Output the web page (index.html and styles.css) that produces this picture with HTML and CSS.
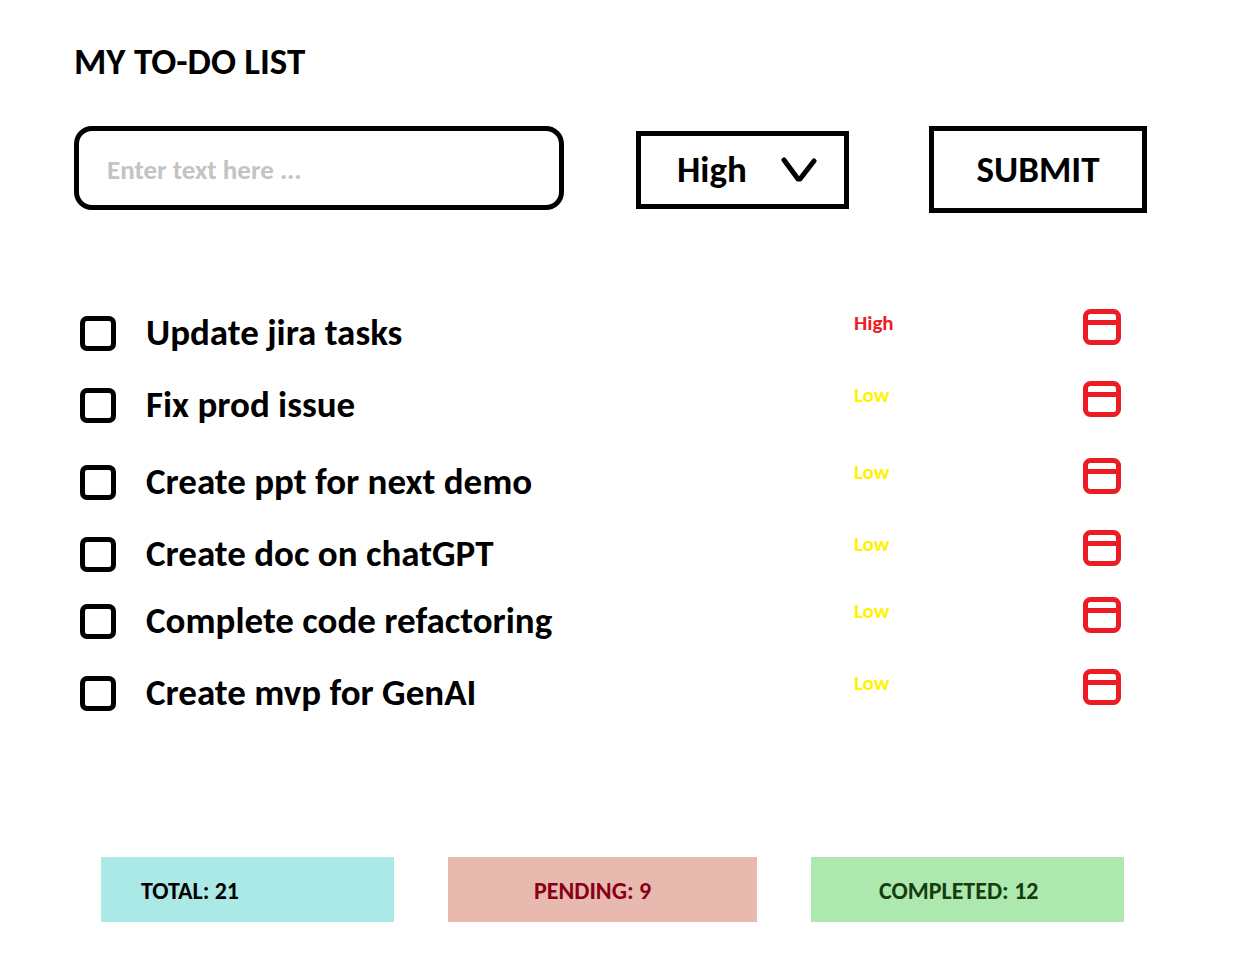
FILE: index.html
```html
<!DOCTYPE html>
<html lang="en">
<head>
<meta charset="utf-8">
<meta name="viewport" content="width=device-width, initial-scale=1">
<title>My To-Do List</title>
<link rel="stylesheet" href="styles.css">
</head>
<body>
<svg class="symbols" aria-hidden="true">
  <symbol id="bin" viewBox="0 0 38 36">
    <rect x="2.5" y="2.5" width="33" height="31" rx="5" fill="none" stroke="currentColor" stroke-width="5"/>
    <path d="M3 13.5H35" stroke="currentColor" stroke-width="5"/>
  </symbol>
</svg>
<main class="page">
  <h1 class="title">MY TO-DO LIST</h1>
  <form class="entry">
    <input class="entry-text" type="text" placeholder="Enter text here ..." aria-label="Task">
    <div class="priority">
      <select class="priority-select" aria-label="Priority">
        <option selected>High</option>
        <option>Low</option>
      </select>
      <svg class="chevron" viewBox="0 0 36 26" aria-hidden="true"><path d="M3 3L17 22H19L33 4" fill="none" stroke="currentColor" stroke-width="5" stroke-linecap="round" stroke-linejoin="round"/></svg>
    </div>
    <button class="submit" type="button">SUBMIT</button>
  </form>
  <ul class="tasks">
    <li class="task"><input class="check" type="checkbox" id="t1"><label class="name" for="t1">Update jira tasks</label><span class="level high">High</span><button class="remove" type="button" aria-label="Delete"><svg class="bin"><use href="#bin"/></svg></button></li>
    <li class="task"><input class="check" type="checkbox" id="t2"><label class="name" for="t2">Fix prod issue</label><span class="level low">Low</span><button class="remove" type="button" aria-label="Delete"><svg class="bin"><use href="#bin"/></svg></button></li>
    <li class="task"><input class="check" type="checkbox" id="t3"><label class="name" for="t3">Create ppt for next demo</label><span class="level low">Low</span><button class="remove" type="button" aria-label="Delete"><svg class="bin"><use href="#bin"/></svg></button></li>
    <li class="task"><input class="check" type="checkbox" id="t4"><label class="name" for="t4">Create doc on chatGPT</label><span class="level low">Low</span><button class="remove" type="button" aria-label="Delete"><svg class="bin"><use href="#bin"/></svg></button></li>
    <li class="task"><input class="check" type="checkbox" id="t5"><label class="name" for="t5">Complete code refactoring</label><span class="level low">Low</span><button class="remove" type="button" aria-label="Delete"><svg class="bin"><use href="#bin"/></svg></button></li>
    <li class="task"><input class="check" type="checkbox" id="t6"><label class="name" for="t6">Create mvp for GenAI</label><span class="level low">Low</span><button class="remove" type="button" aria-label="Delete"><svg class="bin"><use href="#bin"/></svg></button></li>
  </ul>
  <section class="stats">
    <div class="stat total">TOTAL: 21</div>
    <div class="stat pending">PENDING: 9</div>
    <div class="stat completed">COMPLETED: 12</div>
  </section>
</main>
</body>
</html>
```
FILE: styles.css
```css
* { box-sizing: border-box; }
body {
  margin: 0;
  background: #fff;
  color: #000;
  font-family: Calibri, Carlito, Lato, sans-serif;
  font-weight: 700;
}
input, select, button { font: inherit; color: inherit; margin: 0; }
.symbols { position: absolute; width: 0; height: 0; }
.page { padding: 42px 89px 56px 74px; }
.title { margin: 0; font-size: 37px; line-height: 40px; }

.entry {
  display: grid;
  grid-template-columns: 490fr 72fr 213fr 80fr 218fr;
  align-items: center;
  margin-top: 44px;
}
.entry-text {
  align-self: start;
  width: 100%;
  height: 84px;
  padding: 2px 28px 0;
  border: 5px solid #000;
  border-radius: 18px;
  background: #fff;
  font-size: 27px;
}
.entry-text::placeholder { color: #c3c3c3; opacity: 1; }
.priority { grid-column: 3; display: grid; align-items: center; }
.priority > * { grid-area: 1 / 1; }
.priority-select {
  appearance: none;
  width: 100%;
  height: 78px;
  padding: 0 72px 0 36px;
  border: 5px solid #000;
  border-radius: 0;
  background: #fff;
  font-size: 37px;
}
.chevron { justify-self: end; width: 36px; height: 26px; margin-right: 32px; pointer-events: none; }
.submit {
  grid-column: 5;
  height: 87px;
  padding: 0;
  border: 5px solid #000;
  background: #fff;
  font-size: 37px;
}

.tasks {
  display: grid;
  grid-template-rows: 72px 72px 82px 62px 72px 72px;
  margin: 84px 26px 0 6px;
  padding: 0;
  list-style: none;
}
.task {
  display: grid;
  grid-template-columns: 66px 708fr 229fr 38px;
  align-items: center;
}
.check {
  appearance: none;
  width: 36px;
  height: 35px;
  border: 5px solid #000;
  border-radius: 7px;
  background: #fff;
}
.check:checked { background: #000; }
.name { font-size: 37px; line-height: 40px; }
.level { padding-bottom: 20px; font-size: 21px; line-height: 24px; }
.high { color: #ed1c24; }
.low { color: #fff200; }
.remove { padding: 0 0 12px; border: 0; background: none; color: #ed1c24; }
.bin { display: block; width: 38px; height: 36px; }

.stats {
  display: grid;
  grid-template-columns: 293fr 309fr 313fr;
  column-gap: 54px;
  margin: 128px 23px 0 27px;
}
.stat { font-size: 24px; line-height: 28px; padding: 20px 40px 17px; }
.total { background: #abe9e7; }
.pending { background: #e8b9ae; color: #880015; padding-left: 86px; }
.completed { background: #ade8af; color: #153d10; padding-left: 68px; }
```
